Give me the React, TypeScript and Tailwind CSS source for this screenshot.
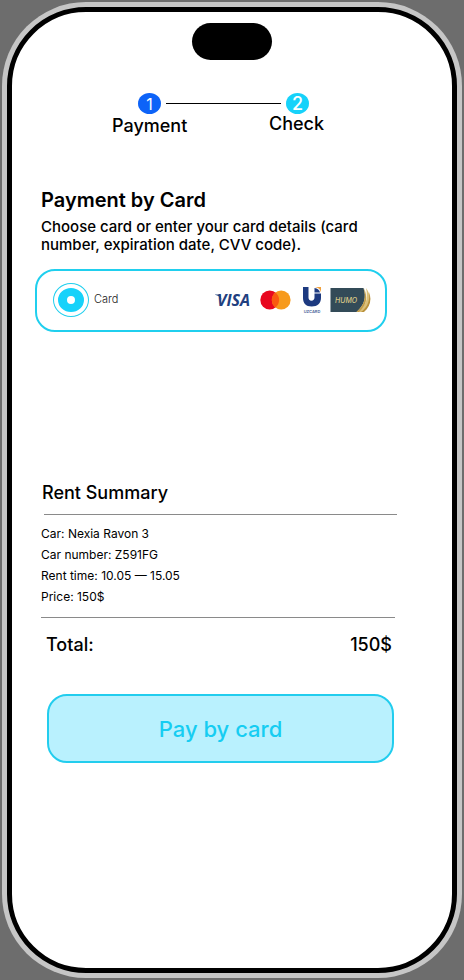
import React from 'react';

interface SummaryItem {
  label: string;
  value: string;
}

const summaryItems: SummaryItem[] = [
  { label: 'Car', value: 'Nexia Ravon 3' },
  { label: 'Car number', value: 'Z591FG' },
  { label: 'Rent time', value: '10.05 — 15.05' },
  { label: 'Price', value: '150$' },
];

function Stepper() {
  return (
    <nav aria-label="Progress" className="mt-[33px] mr-32 ml-[100px]">
      <div className="flex items-center gap-[5px] pr-[15px] pl-[26px] text-white">
        <span className="flex h-[21px] w-[23px] items-center justify-center rounded-[50%] bg-[#0d63f8] text-base">
          1
        </span>
        <span className="h-px flex-1 bg-black" />
        <span className="flex h-[21px] w-[23px] items-center justify-center rounded-[50%] bg-[#16d2fa] text-lg font-medium">
          2
        </span>
      </div>
      <div className="flex items-start justify-between text-lg leading-5 font-medium">
        <span className="pt-0.5">Payment</span>
        <span>Check</span>
      </div>
    </nav>
  );
}

function VisaLogo() {
  return (
    <svg viewBox="0 0 38 24" className="h-6 w-[38px]" role="img" aria-label="Visa">
      <path d="M2 6.500h5l1.600 5.200C7.400 9.200 5.200 7.500 2 6.800z" fill="#21407f" />
      <text
        x="4"
        y="18"
        fontFamily="'Open Sans', sans-serif"
        fontSize="16"
        fontWeight="700"
        fontStyle="italic"
        fill="#21407f"
      >
        VISA
      </text>
    </svg>
  );
}

function MastercardLogo() {
  return (
    <svg viewBox="0 0 34 20" className="h-5 w-[34px]" role="img" aria-label="Mastercard">
      <circle cx="9.700" cy="10" r="9.400" fill="#e8071f" />
      <circle cx="21.200" cy="10" r="9.400" fill="#f79a1c" />
      <path d="M15.450 2.560a9.400 9.400 0 0 1 0 14.880a9.400 9.400 0 0 1 0-14.880z" fill="#fa5a10" />
    </svg>
  );
}

function UzcardLogo() {
  return (
    <svg viewBox="2 0 18 28" className="h-7 w-[18px]" role="img" aria-label="Uzcard">
      <path
        d="M2 1h5.500v10.500c0 2 1 3.200 3 3.200 1.800 0 3-1.200 3-3.200V7.500H20v4.500c0 5-3.500 8.500-9.300 8.500S2 17 2 12z"
        fill="#1d3a80"
      />
      <path d="M14 1h6v5.500c-.5-3-2.500-5-6-5.500z" fill="#f0a03c" />
      <path d="M13.500 2c3 .4 5 2 5.500 4.500h-5.500z" fill="#1d3a80" />
      <text
        x="11"
        y="26.500"
        textAnchor="middle"
        fontFamily="Inter, sans-serif"
        fontSize="4"
        fontWeight="600"
        fill="#4a5f98"
      >
        UZCARD
      </text>
    </svg>
  );
}

function HumoLogo() {
  return (
    <svg viewBox="0 0 41 26" className="h-[26px] w-[41px]" role="img" aria-label="Humo">
      <path d="M36 1c6 8 6 16-3 24h-6C37 18 38 10 36 1z" fill="#dcc078" />
      <path d="M39 5c3 8 1 15-5 20h-3c7-5 9-12 8-20z" fill="#b9913c" />
      <path d="M34 1c5 9 3 17-6 24h-3C34 18 36 10 34 1z" fill="#f1e2b4" />
      <path d="M.5 1h33c3 9 1 17-7 24H.5z" fill="#334b58" />
      <path d="M33.500 1c3 9 1 17-7 24h2.500c8-7 9-15 4.500-24z" fill="#c29d4a" />
      <text
        x="5"
        y="15.500"
        fontFamily="Inter, sans-serif"
        fontSize="7"
        fontWeight="500"
        fontStyle="italic"
        fill="#d9c887"
      >
        HUMO
      </text>
    </svg>
  );
}

function CardOption() {
  return (
    <label
      htmlFor="method-card"
      className="mt-[15px] mr-[65px] ml-[23px] flex h-[63px] items-center rounded-[20px] border-2 border-[#20cfee] pr-3.5 pb-0.5 pl-4"
    >
      <input
        id="method-card"
        type="radio"
        name="method"
        defaultChecked
        className="grid h-[34px] w-9 appearance-none place-items-center rounded-[50%] border border-[#20cfee] checked:before:h-6 checked:before:w-[26px] checked:before:rounded-[50%] checked:before:border-x-[9px] checked:before:border-y-8 checked:before:border-[#16d2fa] checked:before:bg-white checked:before:content-['']"
      />
      <span className="ml-[5px] text-[11px] font-light text-[#222222]">Card</span>
      <span className="ml-auto flex items-center gap-[9px]">
        <VisaLogo />
        <MastercardLogo />
        <UzcardLogo />
        <HumoLogo />
      </span>
    </label>
  );
}

export default function App() {
  return (
    <div className="flex min-h-screen bg-[#6d6d6d] p-0.5 font-['Inter',sans-serif] text-black">
      <div className="flex flex-1 rounded-[84px] bg-[#c6c6c6] p-[5px]">
        <main className="flex-1 rounded-[79px] border-[5px] border-black bg-white pb-20">
          <div className="mx-auto mt-[11px] h-[37px] w-20 rounded-full bg-black" />

          <Stepper />

          <section className="mt-[50px]">
            <h1 className="ml-[29px] text-xl font-semibold">Payment by Card</h1>
            <p className="mt-1 mr-20 ml-[29px] text-[15px] leading-[18px] font-medium">
              Choose card or enter your card details (card number, expiration date, CVV code).
            </p>
            <CardOption />
          </section>

          <section className="mt-[147px] mr-[55px] ml-[29px]">
            <h2 className="ml-px text-lg font-medium">Rent Summary</h2>
            <hr className="mt-[7px] ml-[3px] border-[#8a8a8a]" />
            <ul className="mt-2 text-xs leading-[21px]">
              {summaryItems.map((item) => (
                <li key={item.label}>
                  {item.label}: {item.value}
                </li>
              ))}
            </ul>
            <hr className="mt-[10px] mr-0.5 border-[#8a8a8a]" />
            <div className="mt-[13px] mr-[5px] ml-[5px] flex justify-between text-lg font-medium">
              <span>Total:</span>
              <span>150$</span>
            </div>
          </section>

          <div className="mt-[35px] mr-[58px] ml-[35px]">
            <button
              type="button"
              className="h-[69px] w-full rounded-[20px] border-2 border-[#22cdee] bg-[#b9f1fe] pt-0.5 text-[22px] font-medium text-[#16cdf2]"
            >
              Pay by card
            </button>
          </div>
        </main>
      </div>
    </div>
  );
}
